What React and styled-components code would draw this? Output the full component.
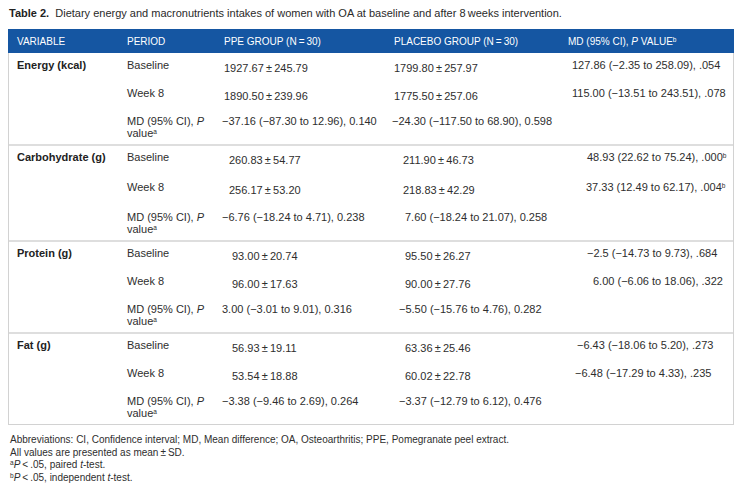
import React from 'react';
import styled, { createGlobalStyle } from 'styled-components';

const GlobalStyle = createGlobalStyle`
  body {
    margin: 0;
    background: #fff;
    font-family: "Liberation Sans", Arial, sans-serif;
    color: #2b2b2b;
  }
`;

const T = '\u2009';
const M = '\u2212';

const sections = [
  {
    name: 'Energy (kcal)',
    gap: 16,
    rows: [
      ['Baseline', `1927.67${T}±${T}245.79`, 0, `1799.80${T}±${T}257.97`, 0, '127.86 (' + M + '2.35 to 258.09), .054', 4],
      ['Week 8', `1890.50${T}±${T}239.96`, 0, `1775.50${T}±${T}257.06`, 0, '115.00 (' + M + '13.51 to 243.51), .078', 4],
      ['md', M + '37.16 (' + M + '87.30 to 12.96), 0.140', -2, M + '24.30 (' + M + '117.50 to 68.90), 0.598', -2],
    ],
  },
  {
    name: 'Carbohydrate (g)',
    gap: 18,
    rows: [
      ['Baseline', `260.83${T}±${T}54.77`, 5, `211.90${T}±${T}46.73`, 9, '48.93 (22.62 to 75.24), .000', 19, true],
      ['Week 8', `256.17${T}±${T}53.20`, 5, `218.83${T}±${T}42.29`, 9, '37.33 (12.49 to 62.17), .004', 18, true],
      ['md', M + '6.76 (' + M + '18.24 to 4.71), 0.238', -2, '7.60 (' + M + '18.24 to 21.07), 0.258', 11],
    ],
  },
  {
    name: 'Protein (g)',
    gap: 16,
    rows: [
      ['Baseline', `93.00${T}±${T}20.74`, 8, `95.50${T}±${T}26.27`, 11, M + '2.5 (' + M + '14.73 to 9.73), .684', 19],
      ['Week 8', `96.00${T}±${T}17.63`, 8, `90.00${T}±${T}27.76`, 11, '6.00 (' + M + '6.06 to 18.06), .322', 25],
      ['md', '3.00 (' + M + '3.01 to 9.01), 0.316', -2, M + '5.50 (' + M + '15.76 to 4.76), 0.282', 5],
    ],
  },
  {
    name: 'Fat (g)',
    gap: 16,
    rows: [
      ['Baseline', `56.93${T}±${T}19.11`, 8, `63.36${T}±${T}25.46`, 11, M + '6.43 (' + M + '18.06 to 5.20), .273', 9],
      ['Week 8', `53.54${T}±${T}18.88`, 8, `60.02${T}±${T}22.78`, 11, M + '6.48 (' + M + '17.29 to 4.33), .235', 7],
      ['md', M + '3.38 (' + M + '9.46 to 2.69), 0.264', -2, M + '3.37 (' + M + '12.79 to 6.12), 0.476', 5],
    ],
  },
];

export default function App() {
  return (
    <Page>
      <GlobalStyle />
      <Caption>
        <b>Table 2.</b>&nbsp; Dietary energy and macronutrients intakes of women with OA at baseline and after 8{T}weeks intervention.
      </Caption>
      <Table>
        <HeadRow>
          <HeadCell>VARIABLE</HeadCell>
          <HeadCell>PERIOD</HeadCell>
          <HeadCell>PPE GROUP (N{T}={T}30)</HeadCell>
          <HeadCell>PLACEBO GROUP (N{T}={T}30)</HeadCell>
          <HeadCell>
            MD (95% CI), <i>P</i> VALUE<Sup>b</Sup>
          </HeadCell>
        </HeadRow>
        {sections.map((s, si) => (
          <Section key={s.name} $gap={s.gap} $first={si === 0}>
            <VarCell>{s.name}</VarCell>
            {s.rows.map((r, ri) => {
              const isMd = r[0] === 'md';
              return (
                <React.Fragment key={ri}>
                  <PeriodCell>
                    {isMd ? (
                      <>
                        MD (95% CI), <i>P</i>
                        <br />
                        value<Sup>a</Sup>
                      </>
                    ) : (
                      r[0]
                    )}
                  </PeriodCell>
                  <ValueCell $indent={r[2]} $drop={!isMd}>{r[1]}</ValueCell>
                  <ValueCell $indent={r[4]} $drop={!isMd}>{r[3]}</ValueCell>
                  <ValueCell $indent={r[6] || 0}>
                    {r[5] || ''}
                    {r[7] && <Sup>b</Sup>}
                  </ValueCell>
                </React.Fragment>
              );
            })}
          </Section>
        ))}
      </Table>
      <Notes>
        <div>Abbreviations: CI, Confidence interval; MD, Mean difference; OA, Osteoarthritis; PPE, Pomegranate peel extract.</div>
        <div>All values are presented as mean{T}±{T}SD.</div>
        <div>
          <Sup>a</Sup>
          <i>P</i>{T}&lt;{T}.05, paired <i>t</i>-test.
        </div>
        <div>
          <Sup>b</Sup>
          <i>P</i>{T}&lt;{T}.05, independent <i>t</i>-test.
        </div>
      </Notes>
    </Page>
  );
}

const Page = styled.div`
  width: 743px;
  padding-top: 7px;
`;

const Caption = styled.div`
  font-size: 11px;
  line-height: 13px;
  color: #2a2a2a;
  padding: 0 9px 9px;
  b {
    font-weight: 700;
    color: #222;
  }
`;

const Table = styled.div`
  margin-left: 8px;
  width: 726px;
  border: 1px solid #d2d2d2;
  border-top: none;
  box-sizing: border-box;
`;

const cols = '110px 97px 170px 174px 1fr';

const HeadRow = styled.div`
  display: grid;
  grid-template-columns: ${cols};
  background: #1556a2;
  height: 24px;
  align-items: center;
  margin: 0 -1px;
  padding: 0 1px;
`;

const HeadCell = styled.div`
  color: #fff;
  font-size: 10px;
  padding-left: 8px;
  padding-top: 1px;
  white-space: nowrap;
`;

const Section = styled.div`
  display: grid;
  grid-template-columns: ${cols};
  grid-template-rows: 12px 12px 23px;
  row-gap: ${p => p.$gap}px;
  padding: ${p => (p.$first ? 7 : 6)}px 0 5px;
  border-top: ${p => (p.$first ? 'none' : '2px solid #dedede')};
  font-size: 11px;
  line-height: 11.5px;
  color: #2e2e2e;
`;

const VarCell = styled.div`
  grid-row: 1 / span 3;
  grid-column: 1;
  font-weight: 700;
  color: #222;
  padding-left: 8px;
  white-space: nowrap;
`;

const PeriodCell = styled.div`
  grid-column: 2;
  padding-left: 8px;
  white-space: nowrap;
`;

const ValueCell = styled.div`
  padding-left: ${p => 8 + p.$indent}px;
  padding-top: ${p => (p.$drop ? 3 : 0)}px;
  margin-bottom: ${p => (p.$drop ? -3 : 0)}px;
  white-space: nowrap;
`;

const Sup = styled.sup`
  font-size: 6.5px;
  line-height: 0;
  vertical-align: 3px;
`;

const Notes = styled.div`
  font-size: 10px;
  line-height: 12.5px;
  color: #2e2e2e;
  padding: 9px 10px 0;
`;
